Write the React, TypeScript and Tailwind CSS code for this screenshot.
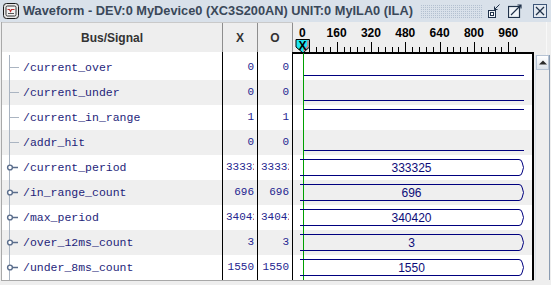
type Sig = { name: string; bus: boolean; x: string; o: string };

const signals: Sig[] = [
  { name: "/current_over", bus: false, x: "0", o: "0" },
  { name: "/current_under", bus: false, x: "0", o: "0" },
  { name: "/current_in_range", bus: false, x: "1", o: "1" },
  { name: "/addr_hit", bus: false, x: "0", o: "0" },
  { name: "/current_period", bus: true, x: "333325", o: "333325" },
  { name: "/in_range_count", bus: true, x: "696", o: "696" },
  { name: "/max_period", bus: true, x: "340420", o: "340420" },
  { name: "/over_12ms_count", bus: true, x: "3", o: "3" },
  { name: "/under_8ms_count", bus: true, x: "1550", o: "1550" },
];

const labels = ["0", "160", "320", "480", "640", "800", "960"];

function AppIcon() {
  return (
    <svg width="16" height="16" viewBox="0 0 16 16">
      <rect x="0.5" y="0.5" width="15" height="15" rx="3" fill="#e8e8e8" stroke="#1a1a1a" />
      <rect x="3" y="3" width="10" height="10" rx="1.5" fill="#f4f4f4" stroke="#333" />
      <path d="M4.5 6.5h2l1 2 1-2h3" fill="none" stroke="#c03030" strokeWidth="1.2" />
      <path d="M5 10.5h6" stroke="#555" />
    </svg>
  );
}

function TitleButtons() {
  return (
    <div className="mr-[4px] flex items-center">
      <svg width="12" height="14" viewBox="0 0 12 14">
        <rect x="0.5" y="6.5" width="7" height="7" fill="#f0f4f8" stroke="#20324a" />
        <rect x="2.5" y="8.5" width="3" height="3" fill="#ffffff" stroke="#20324a" />
        <path d="M11.5 0.5L6.5 5.5M6.5 2.5v3h3" fill="none" stroke="#20324a" />
      </svg>
      <svg width="14" height="14" viewBox="0 0 14 14" className="ml-[8px]">
        <rect x="0.5" y="2.5" width="11" height="11" fill="#f0f4f8" stroke="#20324a" strokeWidth="1.2" />
        <path d="M3 11L13 1M9.5 1h3.5v3.5" fill="none" stroke="#20324a" strokeWidth="1.2" />
      </svg>
      <svg width="14" height="14" viewBox="0 0 14 14" className="ml-[11px]">
        <rect x="0.5" y="0.5" width="13" height="13" fill="#e4eaf1" stroke="#3d5678" />
        <path d="M3 3L11 11M11 3L3 11" stroke="#20324a" strokeWidth="1.3" />
      </svg>
    </div>
  );
}

function Dots() {
  return (
    <svg className="ml-[8px] mr-[5px] h-[13px] flex-1">
      <defs>
        <pattern id="dots" width="2" height="2" patternUnits="userSpaceOnUse">
          <rect width="1" height="1" fill="#b3c0d0" />
        </pattern>
      </defs>
      <rect width="100%" height="100%" fill="url(#dots)" />
    </svg>
  );
}

function Tree({ bus }: { bus: boolean }) {
  return (
    <svg width="20" height="25" className="shrink-0">
      <line x1="7.5" y1="0" x2="7.5" y2="25" stroke="#aab4c1" />
      {bus ? (
        <>
          <line x1="10" y1="12.5" x2="16" y2="12.5" stroke="#5a6d8c" strokeWidth="1.5" />
          <circle cx="8" cy="12.5" r="2.4" fill="#ffffff" stroke="#5a6d8c" strokeWidth="1.4" />
        </>
      ) : (
        <line x1="7.5" y1="12.5" x2="17" y2="12.5" stroke="#aab4c1" />
      )}
    </svg>
  );
}

function ValueCell({ v }: { v: string }) {
  const long = v.length > 4;
  return (
    <div className="flex w-[35px] border-r border-black pl-[3px] pr-[3px]">
      <div
        className={`flex flex-1 items-center overflow-hidden font-['Liberation_Mono',monospace] text-[11px] text-[#25258f] ${
          long ? "justify-start" : "justify-end"
        }`}
      >
        <span className="shrink-0 whitespace-nowrap">{v}</span>
      </div>
    </div>
  );
}

function Ruler() {
  const ticks = Array.from({ length: 32 }, (_, k) => k);
  return (
    <svg width="258" height="33" className="block">
      <rect width="258" height="33" fill="#eeeeee" />
      <line x1="253.5" y1="0" x2="253.5" y2="33" stroke="#f8f8f8" />
      {labels.map((l, i) => (
        <text
          key={l}
          x={9.3 + i * 34.33}
          y="14.7"
          textAnchor="middle"
          fontFamily="Liberation Sans, Arial, sans-serif"
          fontWeight="bold"
          fontSize="12"
          fill="#000"
        >
          {l}
        </text>
      ))}
      {ticks.map((k) => {
        const x = Math.round(9.3 + k * 6.867) + 0.5;
        return <line key={k} x1={x} x2={x} y1={k % 5 === 0 ? 20 : 25} y2="30" stroke="#000" />;
      })}
      <rect x="0" y="30" width="241" height="2" fill="#000" />
      <rect x="0" y="32" width="239" height="1" fill="#ffffff" />
      <rect x="239" y="32" width="2" height="1" fill="#000" />
      <line x1="10.5" y1="30" x2="10.5" y2="33" stroke="#00a000" />
      <polygon points="3,17.5 16.5,17.5 16.5,25 10,31 3,25" fill="#1ee6f0" stroke="#000" />
      <polyline points="15,18.5 15,24.5 10.5,29" fill="none" stroke="#ff6a6a" strokeWidth="1.2" />
      <text
        x="9.5"
        y="28"
        textAnchor="middle"
        fontFamily="Liberation Sans, Arial, sans-serif"
        fontWeight="bold"
        fontSize="12"
        fill="#000"
      >
        X
      </text>
    </svg>
  );
}

function Wave({ s, i }: { s: Sig; i: number }) {
  const y = s.x === "1" ? 4.5 : 20.5;
  return (
    <div className={`relative flex h-[25px] ${i % 2 ? "bg-[#efefef]" : "bg-white"}`}>
      <svg width="239" height="25" className="absolute left-0 top-0">
        <line x1="10.5" y1="0" x2="10.5" y2="25" stroke="#00a000" />
        {s.bus ? (
          <path
            d="M7 4.5H226Q228.8 4.5 229.3 8L230.5 12.5L229.3 17Q228.8 20.5 226 20.5H7"
            fill="none"
            stroke="#00007f"
          />
        ) : (
          <line x1="11" y1={y} x2="231" y2={y} stroke="#00007f" />
        )}
      </svg>
      {s.bus && (
        <div className="relative ml-[7px] flex w-[223px] items-center justify-center text-[12px] text-[#0c0c78]">
          {s.x}
        </div>
      )}
    </div>
  );
}

export default function App() {
  return (
    <div className="flex h-[285px] w-[551px] flex-col overflow-hidden bg-[#eeeeee] font-['Liberation_Sans',Arial,sans-serif]">
      <div className="flex h-[22px] items-center bg-[#d9e1ea] pl-[3px]">
        <AppIcon />
        <span className="ml-[4px] whitespace-nowrap text-[12.8px] font-bold text-[#3a4859]">
          Waveform - DEV:0 MyDevice0 (XC3S200AN) UNIT:0 MyILA0 (ILA)
        </span>
        <Dots />
        <TitleButtons />
      </div>

      <div className="flex">
        <div className="ml-px flex w-[293px] flex-col border-l border-[#a9a9a9]">
          <div className="flex h-[30px] border-t border-[#c9c9c9] bg-[#eeeeee] text-[12px] font-bold text-[#333333]">
            <div className="flex w-[221px] items-center justify-center border-r border-[#8e8e8e]">Bus/Signal</div>
            <div className="flex w-[35px] items-center justify-center border-r border-[#8e8e8e]">X</div>
            <div className="flex w-[35px] items-center justify-center border-r border-[#8e8e8e]">O</div>
          </div>
          <div className="flex h-[3px] bg-white">
            <div className="w-[221px] border-r border-black" />
            <div className="w-[35px] border-r border-black" />
            <div className="w-[35px] border-r border-black" />
          </div>
          {signals.map((s, i) => (
            <div key={s.name} className={`flex h-[25px] ${i % 2 ? "bg-[#efefef]" : "bg-white"}`}>
              <div className="flex w-[221px] items-center border-r border-black">
                <Tree bus={s.bus} />
                <span className="ml-px whitespace-nowrap font-['Liberation_Mono',monospace] text-[11.5px] text-[#1e1e7a]">
                  {s.name}
                </span>
              </div>
              <ValueCell v={s.x} />
              <ValueCell v={s.o} />
            </div>
          ))}
        </div>

        <div className="flex flex-col">
          <Ruler />
          <div className="flex">
            <div className="w-[241px] border-r-2 border-black">
              {signals.map((s, i) => (
                <Wave key={s.name} s={s} i={i} />
              ))}
            </div>
            <div className="flex w-[17px] flex-col pl-px">
              <div className="flex h-[225px] w-[15px] flex-col border-r border-[#8a9cb2] border-l border-l-[#dde3ea]">
                <div className="flex h-[15px] items-center justify-center border border-[#b6c3d4] bg-gradient-to-b from-white to-[#dce3eb]">
                  <svg width="8" height="5" viewBox="0 0 8 5">
                    <path d="M0 4.5L4 0.5L8 4.5Z" fill="#2a2a2a" />
                  </svg>
                </div>
              </div>
            </div>
          </div>
        </div>
      </div>
      <div className="ml-px h-px w-[533px] bg-[#a8a8a8]" />
    </div>
  );
}
